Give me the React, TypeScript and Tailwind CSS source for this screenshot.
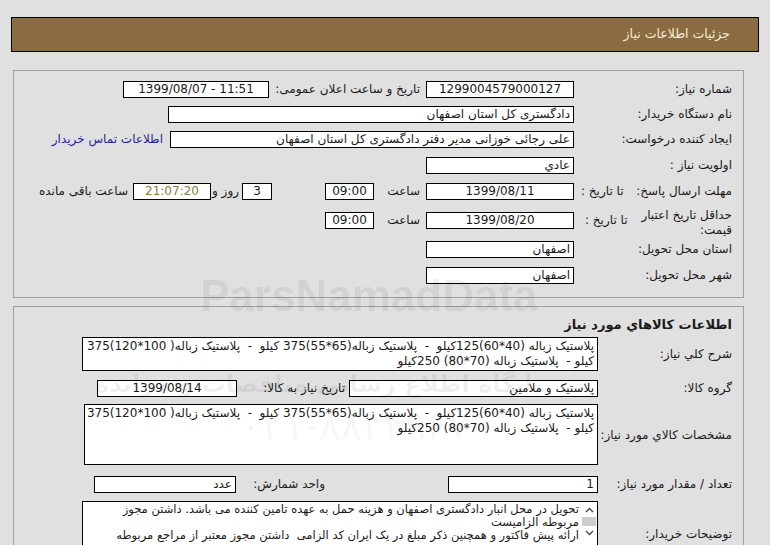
import React from 'react';

const box = 'border border-black bg-white h-[17px] leading-[15px] px-[3px] whitespace-nowrap overflow-hidden shrink-0';

const Box: React.FC<{ w: string; center?: boolean; children?: React.ReactNode }> = ({ w, center, children }) => (
  <div className={`${box} ${w} ${center ? 'text-center' : 'text-right'}`}>{children}</div>
);

const line1 = 'پلاستیک زباله (40*60)125کیلو  -  پلاستیک زباله(65*55)375 کیلو  -  پلاستیک زباله( 100*120)375';
const line2 = 'کیلو -  پلاستیک زباله (70*80) 250کیلو';

export default function App() {
  return (
    <div
      dir="rtl"
      className="relative min-h-screen overflow-hidden bg-[#e0e0e0] pt-[17px] font-['DejaVu_Sans',sans-serif] text-[12px] text-[#1a1a1a]"
    >
      {/* title bar */}
      <div className="mx-[11px] flex h-[35px] items-center border border-black bg-[#8b6c40] pr-[28px] text-[12.5px] text-[#f3ecd9]">
        جزئیات اطلاعات نیاز
      </div>

      {/* first panel */}
      <div className="mt-[18px] ml-[13px] mr-[26px] border border-[#a0a0a0] pt-[10px] pr-[11px] pb-[13px]">
        <div className="flex h-[25px] items-start leading-[17px]">
          <div className="w-[158px] shrink-0">شماره نیاز:</div>
          <Box w="w-[148px]" center>1299004579000127</Box>
          <div className="w-[157px] shrink-0 pr-[6px]">تاریخ و ساعت اعلان عمومی:</div>
          <Box w="w-[146px]" center>
            <span dir="ltr">1399/08/07 - 11:51</span>
          </Box>
        </div>
        <div className="flex h-[25px] items-start leading-[17px]">
          <div className="w-[158px] shrink-0">نام دستگاه خریدار:</div>
          <Box w="w-[406px]">دادگستری کل استان اصفهان</Box>
        </div>
        <div className="flex h-[26px] items-start leading-[17px]">
          <div className="w-[158px] shrink-0">ایجاد کننده درخواست:</div>
          <Box w="w-[404px]">علی رجائی خوزانی مدیر دفتر دادگستری کل استان اصفهان</Box>
          <div className="shrink-0 pr-[7px] text-[#2626a0]">اطلاعات تماس خریدار</div>
        </div>
        <div className="flex h-[26px] items-start leading-[17px]">
          <div className="w-[158px] shrink-0">اولویت نیاز :</div>
          <Box w="w-[148px]">عادي</Box>
        </div>
        <div className="flex h-[29px] items-start leading-[17px]">
          <div className="flex w-[158px] shrink-0 justify-between pl-[7px]">
            <span>مهلت ارسال پاسخ:</span>
            <span>تا تاریخ :</span>
          </div>
          <Box w="w-[148px]" center>1399/08/11</Box>
          <div className="w-[52px] shrink-0 pr-[6px]">ساعت</div>
          <Box w="w-[49px]" center>09:00</Box>
          <div className="w-[53px] shrink-0" />
          <Box w="w-[30px]" center>3</Box>
          <div className="w-[31px] shrink-0 pr-[3px]">روز و</div>
          <div className={`${box} w-[78px] bg-[#efefc9] text-center text-[#8a7d3c]`}>21:07:20</div>
          <div className="shrink-0 pr-[5px]">ساعت باقی مانده</div>
        </div>
        <div className="flex h-[29px] items-start leading-[17px]">
          <div className="flex w-[158px] shrink-0 items-start justify-between pl-[11px]">
            <span className="-mt-[4px] leading-[15px]">
              حداقل تاریخ اعتبار
              <br />
              قیمت:
            </span>
            <span>تا تاریخ :</span>
          </div>
          <Box w="w-[148px]" center>1399/08/20</Box>
          <div className="w-[52px] shrink-0 pr-[6px]">ساعت</div>
          <Box w="w-[49px]" center>09:00</Box>
        </div>
        <div className="flex h-[26px] items-start leading-[17px]">
          <div className="w-[158px] shrink-0">استان محل تحویل:</div>
          <Box w="w-[148px]">اصفهان</Box>
        </div>
        <div className="flex h-[17px] items-start leading-[17px]">
          <div className="w-[158px] shrink-0">شهر محل تحویل:</div>
          <Box w="w-[148px]">اصفهان</Box>
        </div>
      </div>

      {/* second panel */}
      <div className="mt-[8px] ml-[13px] mr-[26px] border border-[#a0a0a0] pt-[9px] pr-[11px] pb-[20px]">
        <div className="h-[17px] text-[13px] font-bold leading-[17px]">اطلاعات كالاهاي مورد نیاز</div>
        <div className="mt-[4px] flex items-center">
          <div className="w-[134px] shrink-0">شرح کلي نیاز:</div>
          <div className="h-[34px] w-[516px] shrink-0 overflow-hidden whitespace-pre border border-black bg-white px-[3px] pt-[1px] leading-[15px]">
            {line1}
            <br />
            {line2}
          </div>
        </div>
        <div className="mt-[9px] flex items-start leading-[17px]">
          <div className="w-[134px] shrink-0">گروه کالا:</div>
          <Box w="w-[249px]">پلاستیک و ملامین</Box>
          <div className="w-[112px] shrink-0 pr-[4px]">تاریخ نیاز به کالا:</div>
          <Box w="w-[140px]" center>1399/08/14</Box>
        </div>
        <div className="mt-[7px] flex items-center">
          <div className="w-[134px] shrink-0">مشخصات كالاي مورد نیاز:</div>
          <div className="h-[61px] w-[514px] shrink-0 overflow-hidden whitespace-pre border border-black bg-white px-[3px] pt-[1px] leading-[15px]">
            {line1}
            <br />
            {line2}
          </div>
        </div>
        <div className="mt-[11px] flex items-start leading-[17px]">
          <div className="w-[134px] shrink-0">تعداد / مقدار مورد نیاز:</div>
          <Box w="w-[150px]">1</Box>
          <div className="w-[212px] shrink-0 pr-[123px]">واحد شمارش:</div>
          <Box w="w-[142px]">عدد</Box>
        </div>
        <div className="mt-[8px] flex items-center">
          <div className="w-[134px] shrink-0">توضیحات خریدار:</div>
          <div className="flex h-[66px] w-[516px] shrink-0 border border-black bg-white">
            <div className="flex w-[16px] shrink-0 flex-col items-center pt-[2px]">
              <svg width="9" height="11" viewBox="0 0 9 11" className="my-[1px]">
                <path d="M1 7 L4.5 3.5 L8 7" fill="none" stroke="#444" strokeWidth="1.3" />
              </svg>
              <div className="h-[9px] w-[14px] bg-[#cdcdcd]" />
              <svg width="9" height="11" viewBox="0 0 9 11" className="my-[1px]">
                <path d="M1 4 L4.5 7.5 L8 4" fill="none" stroke="#444" strokeWidth="1.3" />
              </svg>
            </div>
            <div className="whitespace-pre px-[2px] pt-[1px] text-[11.5px] leading-[13px]">
              {'تحویل در محل انبار دادگستری اصفهان و هزینه حمل به عهده تامین کننده می باشد. داشتن مجوز'}
              <br />
              {'مربوطه الزامیست'}
              <br />
              {'ارائه پیش فاکتور و همچنین ذکر مبلغ در یک ایران کد الزامی  داشتن مجوز معتبر از مراجع مربوطه'}
            </div>
          </div>
        </div>
      </div>

      {/* watermark */}
      <div
        dir="ltr"
        className="pointer-events-none absolute left-[200px] top-[274px] font-['Liberation_Sans',sans-serif] text-[44px] font-bold leading-none text-black/[0.07]"
      >
        ParsNamadData
      </div>
      <div className="pointer-events-none absolute left-[95px] top-[372px] text-[24px] font-bold leading-none text-black/[0.06]">
        پایگاه اطلاع رسانی مناقصات و مزایده
      </div>
      <div
        dir="ltr"
        className="pointer-events-none absolute left-[240px] top-[405px] text-[40px] leading-none text-black/[0.05]"
      >
        ۰۲۱-۸۸۳۴۹۶۷۰
      </div>
    </div>
  );
}
